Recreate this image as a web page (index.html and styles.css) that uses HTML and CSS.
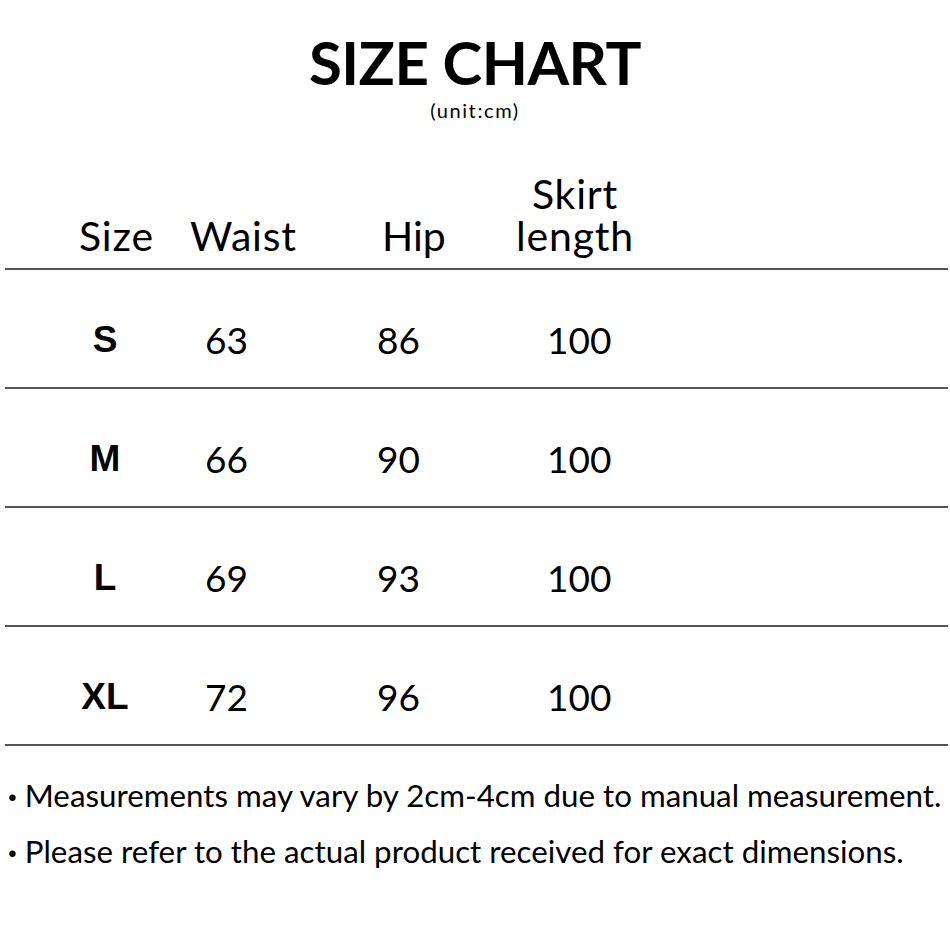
FILE: index.html
```html
<!DOCTYPE html>
<html>
<head>
<meta charset="utf-8">
<link rel="stylesheet" href="styles.css">
</head>
<body>
<div class="page">
  <header class="title-block">
    <h1 class="title">SIZE CHART</h1>
    <div class="unit">(unit:cm)</div>
  </header>
  <div class="chart">
    <div class="head-row">
      <div class="h h-size">Size</div>
      <div class="h h-waist">Waist</div>
      <div class="h h-hip">Hip</div>
      <div class="h h-skirt">Skirt<br>length</div>
    </div>
    <div class="row">
      <div class="size">S</div><div class="val">63</div><div class="val">86</div><div class="val">100</div>
    </div>
    <div class="row">
      <div class="size">M</div><div class="val">66</div><div class="val">90</div><div class="val">100</div>
    </div>
    <div class="row">
      <div class="size">L</div><div class="val">69</div><div class="val">93</div><div class="val">100</div>
    </div>
    <div class="row">
      <div class="size">XL</div><div class="val">72</div><div class="val">96</div><div class="val">100</div>
    </div>
  </div>
  <ul class="notes">
    <li>Measurements may vary by 2cm-4cm due to manual measurement.</li>
    <li>Please refer to the actual product received for exact dimensions.</li>
  </ul>
</div>
</body>
</html>
```
FILE: styles.css
```css
html, body {
  margin: 0;
  padding: 0;
  background: #fff;
}
body {
  font-family: "Lato", "Noto Sans", sans-serif;
  color: #000;
}
.page {
  width: 950px;
  height: 950px;
  overflow: hidden;
}
.title-block {
  text-align: center;
  padding-top: 29px;
}
.title {
  margin: 0;
  font-size: 60px;
  font-weight: 700;
  line-height: 66px;
  letter-spacing: -0.5px;
}
.unit {
  font-size: 20px;
  line-height: 24px;
  margin-top: 3px;
  letter-spacing: 1.6px;
}
.chart {
  margin: 51px 2px 0 5px;
}
.head-row {
  display: grid;
  grid-template-columns: 185px 194px 120px 142px;
  align-items: end;
  font-size: 41px;
  line-height: 42px;
  letter-spacing: 0.8px;
  padding-bottom: 11px;
  border-bottom: 2px solid #555;
}
.h-size { padding-left: 74px; }
.h-hip { margin-left: -2px; letter-spacing: 0; }
.h-skirt { text-align: center; white-space: nowrap; }
.row {
  display: grid;
  grid-template-columns: 200px 172px 170px 1fr;
  align-items: center;
  height: 117px;
  border-bottom: 2px solid #555;
  font-size: 37px;
}
.row > div {
  position: relative;
  top: 11px;
}
.size {
  text-align: center;
  font-weight: 700;
  font-family: "Liberation Sans", Arial, sans-serif;
  font-size: 37px;
}
.val {
  text-align: left;
}
.notes {
  list-style: none;
  margin: 21px 0 0 0;
  padding: 0 0 0 8px;
  font-size: 31.3px;
  line-height: 56px;
  white-space: nowrap;
}
.notes li::before {
  content: "\00B7";
  font-weight: 900;
  margin-right: 8px;
}
```
